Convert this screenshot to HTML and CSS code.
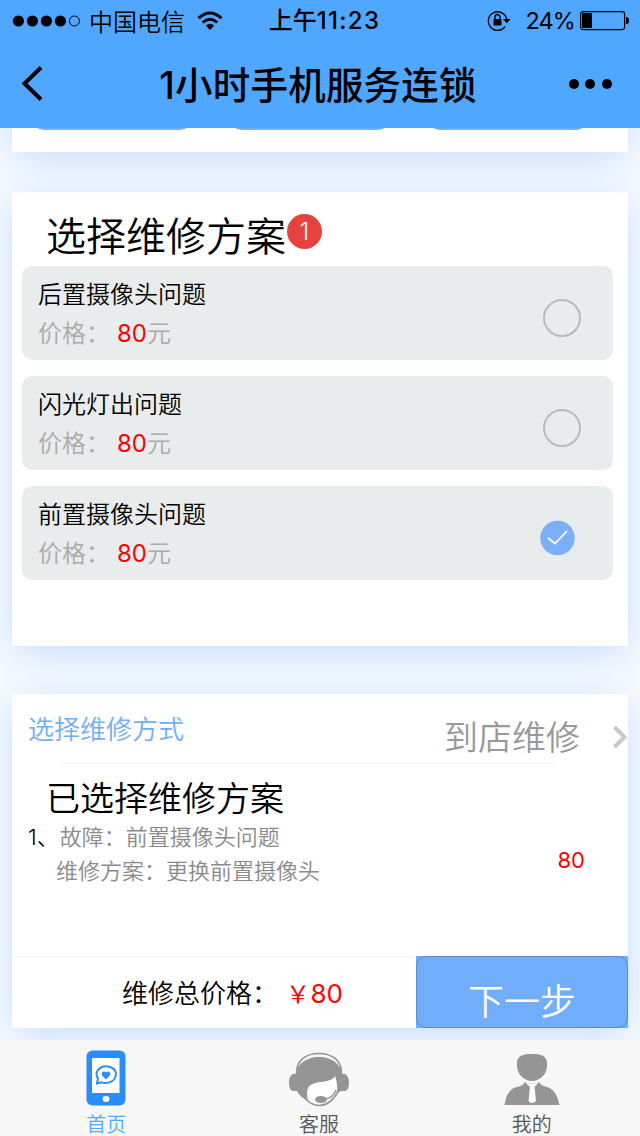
FILE: index.html
```html
<!DOCTYPE html>
<html lang="zh-CN">
<head>
    <meta charset="UTF-8">
    <meta name="viewport" content="width=device-width, initial-scale=1.0">
    <title>1小时手机服务连锁</title>
    <link rel="stylesheet" href="styles.css">
</head>
<body>
    <header class="header">
        <div class="statusBar">
            <div class="carrier">
                <svg class="signal" width="70" height="14" viewBox="0 0 70 14">
                    <circle cx="6.4" cy="7" r="5.6"/>
                    <circle cx="20.4" cy="7" r="5.6"/>
                    <circle cx="34.4" cy="7" r="5.6"/>
                    <circle cx="48.4" cy="7" r="5.6"/>
                    <circle cx="62.4" cy="7" r="5" fill="none" stroke="#000"/>
                </svg>
                <span>中国电信</span>
                <svg class="wifi" width="26" height="20" viewBox="0 0 26 20">
                    <path d="M1.5 7.2Q13 -3.2 24.5 7.2" fill="none" stroke="#000" stroke-width="3"/>
                    <path d="M5.6 11.5Q13 5 20.4 11.5" fill="none" stroke="#000" stroke-width="2.8"/>
                    <path d="M8.8 14.5Q13 11 17.2 14.5L13 19z"/>
                </svg>
            </div>
            <div class="time">上午<span class="clock">11:23</span></div>
            <div class="battery">
                <svg class="lock" width="24" height="22" viewBox="0 0 24 22">
                    <path d="M18.2 16.5A9.3 9.3 0 1 1 19.8 9.5" fill="none" stroke="#000" stroke-width="1.3"/>
                    <path d="M16 9h7.5l-3.7 4.2z"/>
                    <rect x="6.5" y="9" width="8" height="6.5" rx="0.8"/>
                    <path d="M8 9V7a2.5 2.5 0 0 1 5 0v2" fill="none" stroke="#000" stroke-width="1.4"/>
                </svg>
                <span class="percent">24%</span>
                <svg class="cell" width="49" height="20" viewBox="0 0 49 20">
                    <rect x="0.6" y="0.6" width="44" height="18" rx="2.5" fill="none" stroke="#000" stroke-width="1.2"/>
                    <rect x="2" y="2" width="10" height="15" rx="1"/>
                    <path d="M46 6q3 0 3 3.6t-3 3.6z"/>
                </svg>
            </div>
        </div>
        <div class="navBar">
            <svg class="back" width="22" height="38" viewBox="0 0 22 38">
                <path d="M20 2.5L3.5 18.5L20 34.5" fill="none" stroke="#000" stroke-width="4"/>
            </svg>
            <h1 class="title">1小时手机服务连锁</h1>
            <svg class="more" width="44" height="10" viewBox="0 0 44 10">
                <circle cx="5" cy="5" r="5"/>
                <circle cx="21" cy="5" r="5"/>
                <circle cx="38" cy="5" r="5"/>
            </svg>
        </div>
    </header>

    <main class="content">
        <section class="card models">
            <div class="model"></div>
            <div class="model"></div>
            <div class="model"></div>
        </section>

        <section class="card plans">
            <h2 class="planTitle">选择维修方案<span class="badge">1</span></h2>
            <div class="plan">
                <div>
                    <p class="planName">后置摄像头问题</p>
                    <p class="planPrice">价格：<b>80</b>元</p>
                </div>
                <span class="radio"></span>
            </div>
            <div class="plan">
                <div>
                    <p class="planName">闪光灯出问题</p>
                    <p class="planPrice">价格：<b>80</b>元</p>
                </div>
                <span class="radio"></span>
            </div>
            <div class="plan">
                <div>
                    <p class="planName">前置摄像头问题</p>
                    <p class="planPrice">价格：<b>80</b>元</p>
                </div>
                <svg class="checked" width="36" height="36" viewBox="0 0 36 36">
                    <circle cx="18.5" cy="18" r="17.3" fill="#7aaffa"/>
                    <path d="M9 18L16 23.5L28 11" fill="none" stroke="#fff" stroke-width="1.8"/>
                </svg>
            </div>
        </section>

        <section class="card order">
            <div class="way">
                <span class="wayLabel">选择维修方式</span>
                <span class="wayValue">到店维修</span>
                <svg class="arrow" width="16" height="24" viewBox="0 0 16 24">
                    <path d="M2.5 2L12.5 12L2.5 22" fill="none" stroke="#c7c7cc" stroke-width="4"/>
                </svg>
            </div>
            <hr class="line">
            <h2 class="orderTitle">已选择维修方案</h2>
            <div class="detail">
                <div>
                    <p class="fault"><span class="index">1、</span>故障：前置摄像头问题</p>
                    <p class="fix">维修方案：更换前置摄像头</p>
                </div>
                <span class="cost">80</span>
            </div>
            <div class="total">
                <div class="sum">维修总价格：<span class="sumPrice"><span class="yen">￥</span>80</span></div>
                <div class="nextWrap"><button class="next">下一步</button></div>
            </div>
        </section>
    </main>

    <nav class="tabBar">
        <a class="tab active">
            <svg width="64" height="60" viewBox="0 0 64 60">
                <rect x="12.5" y="2.5" width="39" height="55" rx="6" fill="#2a8cff"/>
                <rect x="18" y="10" width="27.5" height="35" fill="#fff"/>
                <path d="M23 35.5L24 30.5Q21 26 24 22Q28 17.5 34 18.5Q42 20 42 26.5Q41 34.5 32 35Q29 35 27.5 34.3Z" fill="none" stroke="#2a8cff" stroke-width="2"/>
                <path d="M32 31.5L28 27.5Q27 23.5 30 23.5Q31.5 23.5 32 24.5Q33 23.3 35 23.7Q37.5 25 35.5 27.8Z" fill="#2a8cff"/>
                <ellipse cx="32" cy="51" rx="3.4" ry="3" fill="#fff"/>
            </svg>
            <span>首页</span>
        </a>
        <a class="tab">
            <svg width="64" height="60" viewBox="0 0 64 60">
                <path d="M9.5 26C9 13 18 5.5 32 5.5S55 13 54.5 26" fill="none" stroke="#959595" stroke-width="1.6"/>
                <path d="M9 29C8 17 19 9 32 9S56 17 55 29L54 43L50 45Q51 36 48 28Q46 32 40 33C32 35 24 34 21 40Q19 45 21 52Q12 50 9 40Z" fill="#959595"/>
                <path d="M11 26H6Q2 28 2 35T6 43H13ZM53 26H58Q62 28 62 35T58 43H51Z" fill="#959595"/>
                <path d="M13 42Q20 57.5 33 57.5Q44 57 52 42" fill="none" stroke="#959595" stroke-width="1.6"/>
                <path d="M21 41Q25 34 36 34Q45 33 48 29Q51 37 47 46Q42 54 34 55Q21 54 21 41Z" fill="#fff"/>
                <path d="M49 42Q46 50 38 51" fill="none" stroke="#959595" stroke-width="1.5"/>
                <ellipse cx="34" cy="51.5" rx="6" ry="3.5" fill="#959595"/>
            </svg>
            <span>客服</span>
        </a>
        <a class="tab">
            <svg width="64" height="60" viewBox="0 0 64 60">
                <path d="M32 6C42 6 48 8 47 18C47 26 40 33 32 33S17 26 17 18C16 8 22 6 32 6Z" fill="#959595"/>
                <path d="M25 34Q32 38 39 34Q41 38 47 39Q56 41 59.5 57H4.5Q7 41 17 39Q23 38 25 34Z" fill="#959595"/>
                <path d="M25 34Q32 38 39 34L34.500 39L36 53Q32 57 28.500 53L30 39Z" fill="#fff"/>
            </svg>
            <span>我的</span>
        </a>
    </nav>
</body>
</html>
```
FILE: styles.css
```css
* {
    margin: 0;
    padding: 0;
    box-sizing: border-box;
}

body {
    height: 1136px;
    overflow: hidden;
    display: flex;
    flex-direction: column;
    font-family: Inter, "Noto Sans CJK SC", sans-serif;
    font-weight: 350;
    color: #000;
    background-color: #fafcff;
}

svg {
    display: block;
    flex-shrink: 0;
}

.header {
    height: 128px;
    flex-shrink: 0;
    background-color: #50a7ff;
    position: relative;
    z-index: 5;
}

.statusBar {
    height: 40px;
    display: grid;
    grid-template-columns: 1fr auto 1fr;
    align-items: center;
    padding: 0 11px 0 12px;
    font-size: 24px;
    font-weight: 400;
    line-height: 42px;
}

.carrier {
    display: flex;
    align-items: center;
    font-family: "Noto Sans CJK SC", sans-serif;
    font-weight: 350;
}

.signal {
    margin-right: 7px;
}

.wifi {
    margin-left: 12px;
}

.time {
    padding-left: 8px;
    font-weight: 500;
}

.clock {
    letter-spacing: 1.3px;
}

.battery {
    display: flex;
    align-items: center;
    justify-content: flex-end;
}

.percent {
    margin: 0 5px 0 14px;
    font-size: 23.5px;
    letter-spacing: -0.9px;
}

.navBar {
    height: 88px;
    display: flex;
    align-items: center;
    justify-content: space-between;
    padding: 0 27px 0 21px;
}

.title {
    padding: 3px 0 0 24px;
    font-size: 37.5px;
    font-weight: 500;
    line-height: 88px;
    letter-spacing: 0.2px;
}

.content {
    flex: 1;
    padding: 0 12px;
    overflow: hidden;
}

.card {
    position: relative;
    background-color: #fff;
    box-shadow: 0 8px 40px #c3dbfc;
}

/* the model list is scrolled up under the header */
.models {
    z-index: 3;
    height: 200px;
    margin: -176px 0 40px;
    display: flex;
    align-items: flex-end;
    gap: 26px;
    padding: 0 34px 22px 14px;
}

.model {
    flex: 1;
    height: 60px;
    border-radius: 20px;
    background-color: #70adfa;
}

.plans {
    z-index: 2;
    height: 454px;
    margin-bottom: 48px;
    padding: 13px 15px 0 10px;
}

.planTitle {
    height: 61px;
    padding-left: 24px;
    display: flex;
    font-size: 40px;
    font-weight: 350;
    line-height: 64px;
}

.badge {
    width: 35px;
    height: 35px;
    margin: 9px 0 0 1px;
    border-radius: 50%;
    background-color: #e64340;
    color: #fff;
    font-size: 24px;
    line-height: 36px;
    text-align: center;
}

.plan {
    height: 94px;
    margin-bottom: 16px;
    padding: 9px 32px 0 16px;
    display: flex;
    justify-content: space-between;
    border-radius: 10px;
    background-color: #e8eced;
}

.planName {
    font-size: 24px;
    line-height: 39px;
}

.planPrice {
    font-size: 24px;
    line-height: 39px;
    color: #aaa;
}

.planPrice b {
    margin-left: 7px;
    font-size: 24px;
    font-weight: 400;
    color: #f00;
}

.radio {
    width: 38px;
    height: 38px;
    margin-top: 24px;
    border: 2px solid #b8baba;
    border-radius: 50%;
}

.checked {
    margin: 25px 6px 0 0;
}

.order {
    z-index: 1;
    height: 334px;
    display: flex;
    flex-direction: column;
}

.way {
    height: 68px;
    padding: 14px 0 0 16px;
    display: flex;
    align-items: center;
}

.wayLabel {
    flex: 1;
    margin-top: -15px;
    font-size: 26px;
    color: #70adfa;
}

.wayValue {
    font-size: 34px;
    color: #999;
}

.arrow {
    margin-left: 32px;
    margin-top: 3px;
}

.line {
    height: 2px;
    margin: 0 73px 0 50px;
    border: none;
    background-color: #f7f7f7;
}

.orderTitle {
    padding: 13px 0 0 34px;
    font-size: 34px;
    font-weight: 350;
    line-height: 43px;
}

.detail {
    flex: 1;
    display: flex;
    justify-content: space-between;
    padding: 0 43px 0 16px;
    font-size: 22px;
    line-height: 34px;
    color: #8a8a8a;
}

.index {
    margin-right: 1px;
    color: #000;
}

.fix {
    padding-left: 28px;
}

.cost {
    margin-top: 23px;
    font-weight: 400;
    color: #f00;
}

.total {
    height: 72px;
    display: flex;
}

.sum {
    flex: 1;
    padding-left: 110px;
    border-top: 2px solid #f7f7f7;
    font-size: 26px;
    line-height: 71px;
}

.sumPrice {
    margin-left: 8px;
    font-size: 26px;
    font-weight: 400;
    color: #f00;
}

.yen {
    font-size: 24px;
    letter-spacing: 0.5px;
}

.nextWrap {
    width: 212px;
    background-color: #70adfa;
}

.next {
    width: 212px;
    height: 72px;
    padding-top: 20px;
    border: 1px solid #5a8ac8;
    border-radius: 10px;
    background-color: #70adfa;
    color: #fff;
    font-family: inherit;
    font-size: 36px;
    font-weight: 350;
    line-height: 50px;
}

.tabBar {
    height: 96px;
    flex-shrink: 0;
    padding: 8px 2px 0 0;
    display: flex;
    background-color: #f7f7f7;
    position: relative;
    z-index: 5;
}

.tab {
    flex: 1;
    display: flex;
    flex-direction: column;
    align-items: center;
    font-size: 20px;
    line-height: 35px;
    color: #555;
}

.active {
    color: #50a7ff;
}
```
